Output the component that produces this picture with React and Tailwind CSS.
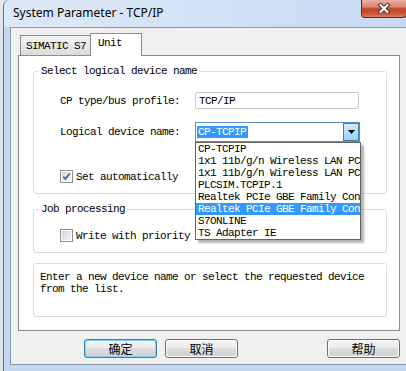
import React from "react";

const mono =
  "font-['Liberation_Mono','DejaVu_Sans_Mono',monospace] text-[11px] leading-[12px] tracking-[-0.6px] text-black whitespace-nowrap";

const items = [
  "CP-TCPIP",
  "1x1 11b/g/n Wireless LAN PC",
  "1x1 11b/g/n Wireless LAN PC",
  "PLCSIM.TCPIP.1",
  "Realtek PCIe GBE Family Con",
  "Realtek PCIe GBE Family Con",
  "S7ONLINE",
  "TS Adapter IE",
];

function Check({ checked }) {
  return (
    <span className="w-[13px] h-[13px] border border-[#8e8f8f] bg-white p-px shrink-0 flex">
      <span className="flex-1 bg-[linear-gradient(135deg,#d4d4d4,#f6f6f6)] flex items-center justify-center">
        {checked && (
          <svg width="9" height="9" viewBox="0 0 9 9">
            <path d="M1.3 4.6 L3.4 7 L7.7 1.4" fill="none" stroke="#4a5c94" strokeWidth="1.7" />
          </svg>
        )}
      </span>
    </span>
  );
}

function Btn({ children, def }) {
  return (
    <div
      className={
        def
          ? "w-[73px] h-[19px] rounded-[3px] border border-[#3c7fb1] p-px bg-[#7fd3f7]"
          : "w-[73px] h-[19px] rounded-[3px] border border-[#707070] p-px bg-[#fbfbfb]"
      }
    >
      <div className="h-full rounded-[2px] bg-[linear-gradient(#f3f3f3,#ececec_45%,#dedede_50%,#d2d2d2)] flex items-center justify-center text-[12px] leading-[14px] text-black font-['Noto_Sans_CJK_SC','Noto_Sans',sans-serif]">
        {children}
      </div>
    </div>
  );
}

export default function App() {
  return (
    <div className="w-[406px] h-[371px] overflow-hidden bg-[#e3e7ec] flex">
      <div className="w-[3px] shrink-0" />
      <div className="w-[412px] shrink-0 h-full flex flex-col border-l border-[#5d6d80] rounded-tl-[6px] bg-[linear-gradient(to_right,#dde9f7,#c6daf2)]">
        {/* title bar */}
        <div className="h-[27px] shrink-0 flex items-start">
          <div className="pl-[9px] pt-[5px] text-[12px] leading-[16px] text-black font-['Noto_Sans',sans-serif]">
            System Parameter - TCP/IP
          </div>
          <div className="ml-auto mr-[8px] w-[46px] h-[18px] rounded-b-[4px] border border-t-0 border-[#6e2417] bg-[linear-gradient(#eab0a2,#d98470_40%,#c4432b_52%,#c84f33_75%,#dc8064)] flex items-center justify-center">
            <svg width="14" height="11" viewBox="0 0 14 11">
              <path d="M3.5 2 L10.5 9 M10.5 2 L3.5 9" stroke="#4a2a22" strokeWidth="4" strokeLinecap="square" />
              <path d="M3.5 2 L10.5 9 M10.5 2 L3.5 9" stroke="#ffffff" strokeWidth="2.2" strokeLinecap="square" />
            </svg>
          </div>
        </div>
        {/* frame + client */}
        <div className="flex-1 flex pl-[6px] pb-[6px] bg-[#c2d8f1]">
          <div className="w-[398px] shrink-0 border border-[#8a98aa] bg-[#f0f0f0] flex flex-col pl-[7px] pt-[5px]">
            {/* tabs */}
            <div className="relative z-10 flex items-end h-[23px] pl-[2px]">
              <div className={"w-[70px] h-[21px] border border-r-0 border-[#898c95] bg-[linear-gradient(#f4f4f4,#e6e6e6_50%,#dcdcdc)] flex items-center pl-[5px] " + mono}>
                SIMATIC S7
              </div>
              <div className={"w-[52px] h-[23px] border border-b-0 border-[#898c95] bg-white flex items-start pt-[3px] pl-[7px] " + mono}>
                Unit
              </div>
            </div>
            {/* panel */}
            <div className="-mt-px w-[382px] h-[276px] border border-[#898c95] bg-white flex flex-col pt-[9px] pl-[14px] pr-[12px]">
              {/* group 1 */}
              <fieldset className="border border-[#d5dfe5] rounded-[3px] relative">
                <legend className={"ml-[5px] px-[2px] " + mono}>Select logical device name</legend>
                <div className="flex items-center h-[17px] mt-[15px] pl-[26px]">
                  <span className={"w-[135px] " + mono}>CP type/bus profile:</span>
                  <div className={"w-[164px] h-[17px] border border-[#c5c9d0] rounded-[2px] flex items-center pl-[3px] " + mono}>
                    TCP/IP
                  </div>
                </div>
                <div className="flex items-center h-[20px] mt-[13px] pl-[26px]">
                  <span className={"w-[135px] " + mono}>Logical device name:</span>
                  <div className="relative w-[165px] h-[20px] border border-[#5e8fbd] bg-white flex items-center pl-px">
                    <span className="bg-[#3399ff] text-white h-[12px] pl-px pr-[2px] font-['Liberation_Mono','DejaVu_Sans_Mono',monospace] text-[11px] leading-[12px] tracking-[-0.6px] whitespace-nowrap">
                      CP-TCPIP
                    </span>
                    <div className="ml-auto w-[16px] h-[18px] border border-[#3c7fb1] bg-[linear-gradient(#d3ecfb,#b6def8_50%,#9ccff3)] flex items-center justify-center">
                      <svg width="7" height="4" viewBox="0 0 7 4">
                        <path d="M0 0 H7 L3.5 4 Z" fill="#000" />
                      </svg>
                    </div>
                    {/* dropdown list */}
                    <div className="absolute left-[-1px] top-[19px] w-[166px] border border-[#646464] bg-white shadow-[3px_3px_2px_rgba(0,0,0,0.3)] z-20 overflow-hidden">
                      {items.map((it, i) => (
                        <div
                          key={i}
                          className={
                            i === 5
                              ? "h-[12px] bg-[#3399ff] pl-[2px] font-['Liberation_Mono','DejaVu_Sans_Mono',monospace] text-[11px] leading-[12px] tracking-[-0.6px] text-white whitespace-nowrap"
                              : "h-[12px] pl-[2px] " + mono
                          }
                        >
                          {it}
                        </div>
                      ))}
                    </div>
                  </div>
                </div>
                <div className="flex items-center mt-[28px] pl-[26px] pb-[10px] gap-[3px]">
                  <Check checked />
                  <span className={mono}>Set automatically</span>
                </div>
              </fieldset>
              {/* group 2 */}
              <fieldset className="mt-[9px] border border-[#d5dfe5] rounded-[3px]">
                <legend className={"ml-[5px] px-[2px] " + mono}>Job processing</legend>
                <div className="flex items-center mt-[14px] pl-[26px] pb-[10px] gap-[3px]">
                  <Check />
                  <span className={mono}>Write with priority</span>
                </div>
              </fieldset>
              {/* group 3 */}
              <div className={"mt-[10px] h-[54px] border border-[#d5dfe5] rounded-[3px] pt-[7px] pl-[6px] " + mono}>
                Enter a new device name or select the requested device
                <br />
                from the list.
              </div>
            </div>
            {/* buttons */}
            <div className="mt-[8px] w-[382px] flex pl-[66px] gap-[8px]">
              <Btn def>确定</Btn>
              <Btn>取消</Btn>
              <div className="ml-auto">
                <Btn>帮助</Btn>
              </div>
            </div>
          </div>
          <div className="flex-1" />
        </div>
      </div>
    </div>
  );
}
